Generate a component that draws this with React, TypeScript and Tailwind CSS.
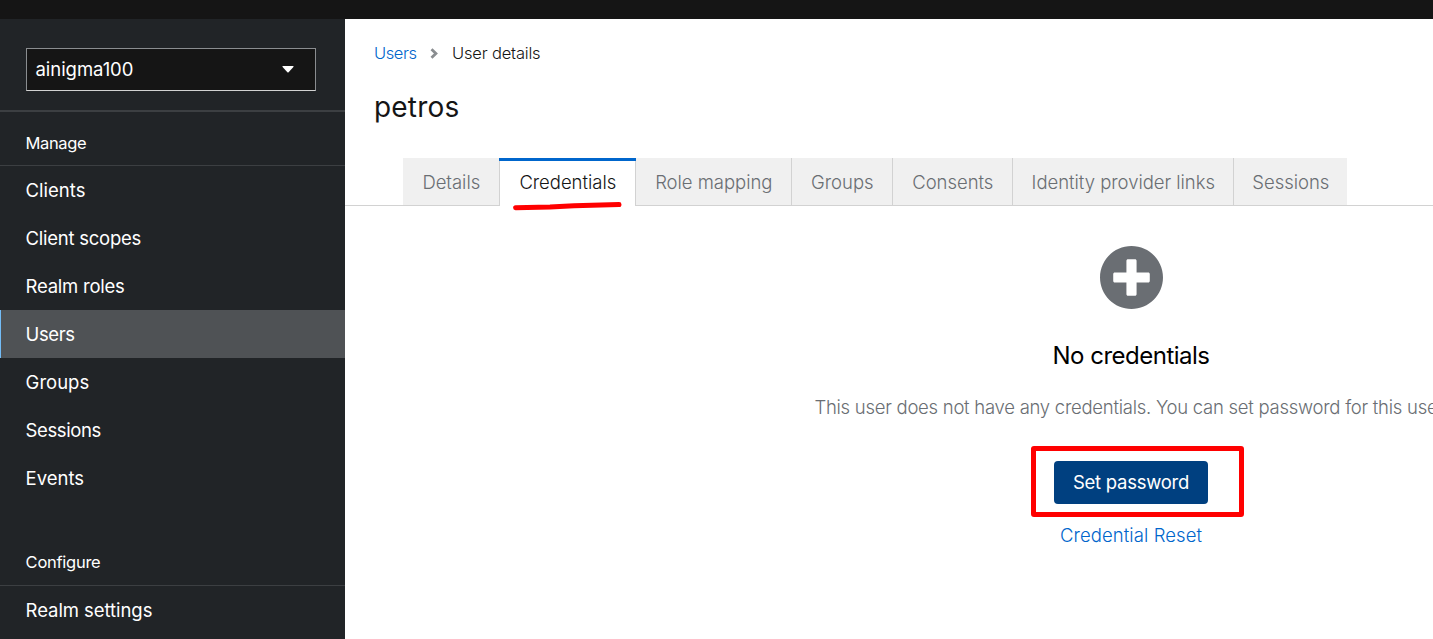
import { FaPlusCircle } from 'react-icons/fa';

const manage = [
  { label: 'Clients', tracking: 'tracking-normal' },
  { label: 'Client scopes', tracking: 'tracking-[-0.25px]' },
  { label: 'Realm roles', tracking: 'tracking-[-0.25px]' },
  { label: 'Users', tracking: 'tracking-[-0.4px]', active: true },
  { label: 'Groups', tracking: 'tracking-normal' },
  { label: 'Sessions', tracking: 'tracking-[-0.4px]' },
  { label: 'Events', tracking: 'tracking-normal' },
];

const tabs = [
  { label: 'Details', width: 'w-[97px]' },
  { label: 'Credentials', width: 'w-[136px]', active: true },
  { label: 'Role mapping', width: 'w-[156px]' },
  { label: 'Groups', width: 'w-[101px]' },
  { label: 'Consents', width: 'w-[120px]' },
  { label: 'Identity provider links', width: 'w-[221px]' },
  { label: 'Sessions', width: 'w-[113px]' },
];

function NavItem({ label, tracking, active }: { label: string; tracking: string; active?: boolean }) {
  return (
    <a
      className={`flex h-12 items-center border-l pt-[2px] pl-[24.6px] text-[18.5px] ${tracking} ${
        active ? 'border-[#73bcf7] bg-[#4f5255]' : 'border-transparent'
      }`}
    >
      {label}
    </a>
  );
}

function Tab({ label, width, active }: { label: string; width: string; active?: boolean }) {
  return (
    <button
      className={`relative flex shrink-0 items-center justify-center border-r border-[#d2d2d2] pt-[2px] pl-[0.6px] tracking-[-0.03px] last:border-r-0 ${width} ${
        active ? '-mb-px bg-white pb-px text-[#151515]' : 'bg-[#f0f0f0]'
      }`}
    >
      {active && <span className="absolute top-0 -right-px -left-px h-[3px] bg-[#0066cc]" />}
      {label}
    </button>
  );
}

export default function App() {
  return (
    <div className="flex h-[639px] w-[1433px] flex-col overflow-hidden bg-white font-['Inter',sans-serif] text-[#151515]">
      <header className="h-[19px] shrink-0 bg-[#151515]" />
      <div className="flex min-h-0 flex-1">
        <nav className="w-[345px] shrink-0 overflow-hidden bg-[#212427] text-white">
          <div className="h-[93px] border-b-2 border-[#3c3f42] px-[26px] pt-[29px]">
            <button className="flex h-[43px] w-[290px] items-center justify-between border border-[#8a8d90] border-b-[#d2d2d2] bg-[#151515] pr-[21px] pl-[8.5px] text-[18.5px] tracking-[-0.05px]">
              ainigma100
              <svg className="h-[7px] w-3" viewBox="0 0 12 7" fill="currentColor">
                <path d="M1 0h10q1 .1.4 1L6.6 6.3q-.6.5-1.2 0L.6 1Q0 .1 1 0z" />
              </svg>
            </button>
          </div>
          <h2 className="flex h-[54px] items-center border-b border-[#3c3f42] pt-[10px] pl-[25.6px] text-[16.5px] tracking-[-0.4px]">
            Manage
          </h2>
          {manage.map((item) => (
            <NavItem key={item.label} {...item} />
          ))}
          <h2 className="mt-[30px] flex h-[54px] items-center border-b border-[#3c3f42] pt-[8px] pl-[25.6px] text-[16.5px] tracking-[-0.27px]">
            Configure
          </h2>
          <NavItem label="Realm settings" tracking="tracking-[-0.06px]" />
        </nav>

        <main className="relative min-w-0 flex-1 overflow-hidden">
          <div className="flex h-[68px] items-center pl-[29px] text-[16.5px] font-light">
            <a className="w-[56px] tracking-[-0.4px] text-[#0066cc]">Users</a>
            <svg className="mr-[14px] h-[11px] w-2" viewBox="0 0 8 11" fill="none" stroke="#8a8d90" strokeWidth="2.8">
              <path d="M1.5 1.3 5.9 5.5 1.5 9.7" />
            </svg>
            <span className="tracking-[-0.18px]">User details</span>
          </div>
          <h1 className="-mt-px h-[72px] pl-[29px] text-[28px] tracking-[0.2px]">petros</h1>
          <div className="flex h-12 border-b border-[#d2d2d2] pl-[58px] text-[18.5px] font-light text-[#6a6e73]">
            {tabs.map((tab) => (
              <Tab key={tab.label} {...tab} />
            ))}
          </div>
          <section className="flex w-[1572px] flex-col items-center pt-[39px]">
            <FaPlusCircle className="size-[65px] text-[#6a6e73]" />
            <h2 className="mt-7 text-[24px] tracking-[-0.5px] text-black">No credentials</h2>
            <p className="mt-5 text-[18.5px] font-light tracking-[-0.26px] text-[#6a6e73]">
              This user does not have any credentials. You can set password for this user.
            </p>
            <button className="mt-[39px] h-[43px] w-[154px] rounded-[4px] bg-[#004080] pt-[2px] text-[18.5px] tracking-[-0.26px] text-white">
              Set password
            </button>
            <a className="mt-[18px] text-[18.5px] font-light tracking-[0.08px] text-[#0066cc]">Credential Reset</a>
          </section>

          <svg className="absolute top-[180px] left-[165px] h-4 w-[115px]" viewBox="0 0 115 16" fill="none">
            <path d="M5.6 8.7 40 8 64 6.8 109 5.6" stroke="#f00" strokeWidth="5" strokeLinecap="round" strokeLinejoin="round" />
          </svg>
          <div className="absolute top-[427px] left-[686px] h-[71px] w-[213px] rounded-[3px] border-[5px] border-[#ff0000]" />
        </main>
      </div>
    </div>
  );
}
